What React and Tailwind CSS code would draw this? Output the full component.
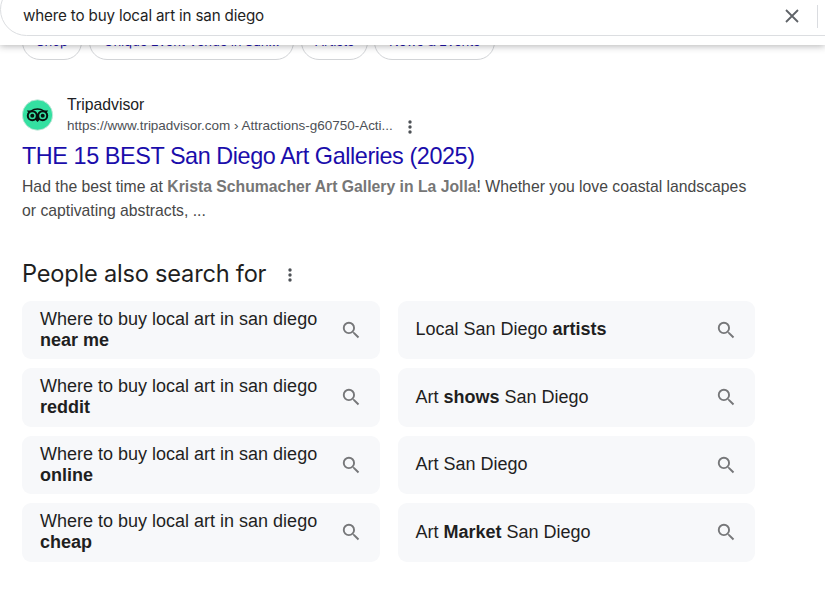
const ARIAL = "font-['Liberation_Sans',Arial,sans-serif]";
const DISPLAY = "font-['Inter',sans-serif]";

const chips = [
  { label: "Shop", width: "w-[60px]" },
  { label: "Unique Event Venue in San...", width: "w-[205px]" },
  { label: "Artists", width: "w-[67px]" },
  { label: "News & Events", width: "w-[121px] -ml-px" },
];

const related = [
  [<>Where to buy local art in san diego <b>near me</b></>, <>Local San Diego <b>artists</b></>],
  [<>Where to buy local art in san diego <b>reddit</b></>, <>Art <b>shows</b> San Diego</>],
  [<>Where to buy local art in san diego <b>online</b></>, <>Art San Diego</>],
  [<>Where to buy local art in san diego <b>cheap</b></>, <>Art <b>Market</b> San Diego</>],
];

function Dots() {
  return (
    <svg viewBox="0 0 4 14" className="h-[14px] w-1 shrink-0 fill-[#4d5156]">
      <circle cx="2" cy="2" r="1.7" />
      <circle cx="2" cy="7" r="1.7" />
      <circle cx="2" cy="12" r="1.7" />
    </svg>
  );
}

function SearchIcon() {
  return (
    <svg viewBox="0 0 24 24" className="size-[22.5px] shrink-0 fill-[#767779]">
      <path d="M15.5 14h-.79l-.28-.27A6.471 6.471 0 0 0 16 9.5 6.5 6.5 0 1 0 9.5 16c1.61 0 3.09-.59 4.23-1.57l.27.28v.79l5 4.99L20.49 19l-4.99-5zm-6 0C7.01 14 5 11.99 5 9.5S7.01 5 9.5 5 14 7.01 14 9.5 11.99 14 9.5 14z" />
    </svg>
  );
}

function OwlLogo() {
  return (
    <svg viewBox="0 0 32 32" className="size-8 shrink-0">
      <circle cx="15.500" cy="16" r="15.200" fill="#34e0a1" stroke="#d5e5df" strokeWidth="0.8" />
      <path d="M4.800 11.500h4C10.800 10 13 9.300 15.500 9.300s4.700.7 6.700 2.200h4l-1.700 2.200-9 9.300-9-9.300z" fill="#07120e" />
      <path d="M10.800 11.500Q15.500 10.200 20.200 11.500Q16.500 12.800 15.500 15.300Q14.500 12.800 10.800 11.500z" fill="#34e0a1" />
      <circle cx="10.300" cy="16.700" r="5.500" fill="#07120e" />
      <circle cx="20.700" cy="16.700" r="5.500" fill="#07120e" />
      <circle cx="10.300" cy="16.700" r="3.500" fill="#34e0a1" />
      <circle cx="20.700" cy="16.700" r="3.500" fill="#34e0a1" />
      <circle cx="10.300" cy="16.700" r="2" fill="#07120e" />
      <circle cx="20.700" cy="16.700" r="2" fill="#07120e" />
    </svg>
  );
}

function Header() {
  return (
    <header className="relative z-10 h-[45px] bg-white shadow-[0_1px_7px_rgba(32,33,36,0.34)]">
      <div className="h-9 overflow-hidden">
        <div className="-mt-[17px] flex h-[53px] w-[860px] items-center rounded-full border border-[#dcdee1] pt-[13px] pl-[22px]">
          <span className={`${DISPLAY} w-[762px] text-[15.2px] leading-6 tracking-[-0.17px] text-[#1f1f1f]`}>
            where to buy local art in san diego
          </span>
          <svg viewBox="0 0 14 14" className="size-[14px] shrink-0" stroke="#5f6368" strokeWidth="1.8">
            <path d="M1 1l12 12M13 1L1 13" />
          </svg>
          <span className="ml-[18px] h-[23px] w-px bg-[#dadce0]" />
        </div>
      </div>
    </header>
  );
}

export default function App() {
  return (
    <div className={`${ARIAL} h-[598px] w-[825px] overflow-hidden bg-white`}>
      <Header />
      <nav className="-mt-[21px] flex gap-[7px] pl-[22px]">
        {chips.map((c) => (
          <span
            key={c.label}
            className={`${c.width} ${DISPLAY} flex h-9 items-center justify-center rounded-full border border-[#d2d4d7] pb-px text-[13.2px] tracking-[-0.14px] whitespace-nowrap text-[#1a0dab]`}
          >
            {c.label}
          </span>
        ))}
      </nav>

      <article className="pt-[34px] pl-[22px]">
        <div className="flex items-start">
          <div className="pt-[5px]"><OwlLogo /></div>
          <div className="ml-[13px]">
            <div className="text-[15.75px] leading-[22px] text-[#202124]">Tripadvisor</div>
            <div className="flex h-5 items-center">
              <span className="w-[341px] text-[13.5px] tracking-[-0.01px] whitespace-nowrap text-[#4d5156]">
                https://www.tripadvisor.com › Attractions-g60750-Acti...
              </span>
              <div className="pt-0.5"><Dots /></div>
            </div>
          </div>
        </div>
        <h3 className="mt-[5px] text-[23.4px] leading-[30px] tracking-[-0.42px] whitespace-nowrap text-[#1a0dab]">
          THE 15 BEST San Diego Art Galleries (2025)
        </h3>
        <p className="mt-1 w-[733px] text-[15.75px] leading-6 text-[#474747]">
          Had the best time at <b className="text-[#767676]">Krista Schumacher Art Gallery in La Jolla</b>! Whether you love coastal landscapes or captivating abstracts, ...
        </p>
      </article>

      <section className="pt-[35px] pl-[22px]">
        <div className="flex h-[32px] items-center">
          <h2 className={`${DISPLAY} w-[266px] text-[23.6px] leading-8 tracking-[-0.21px] whitespace-nowrap text-[#1f1f1f]`}>
            People also search for
          </h2>
          <div className="pt-px"><Dots /></div>
        </div>
        <div className="mt-[10.7px] grid w-[733px] grid-cols-2 gap-x-[18px] gap-y-[9px]">
          {related.flat().map((text, i) => (
            <div key={i} className="flex h-[58.5px] items-center justify-between rounded-[9px] bg-[#f7f8fa] pr-[17.5px] pl-[18px]">
              <span className="w-[288px] pb-[0.4px] text-[18px] leading-[21px] text-[#1f1f1f]">{text}</span>
              <SearchIcon />
            </div>
          ))}
        </div>
      </section>
    </div>
  );
}
